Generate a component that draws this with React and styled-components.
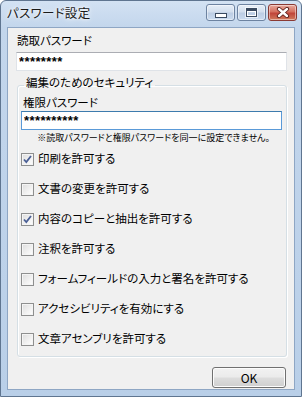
import React from 'react';
import styled, { createGlobalStyle } from 'styled-components';

const GlobalStyle = createGlobalStyle`
  html, body {
    margin: 0;
    padding: 0;
    background: #ffffff;
  }
  * {
    box-sizing: border-box;
  }
`;

const FONT = `"Noto Sans CJK JP", "Noto Sans", sans-serif`;

const Window = styled.div`
  width: 302px;
  height: 397px;
  display: flex;
  flex-direction: column;
  border: 1px solid #5f7590;
  border-radius: 6px 6px 0 0;
  padding: 0 6px 6px 6px;
  background: linear-gradient(180deg, #d3e2f3 0px, #c3d6ec 26px, #b9cfe8 100%);
  font-family: ${FONT};
  font-feature-settings: "palt";
  color: #000;
`;

const TitleBar = styled.div`
  height: 26px;
  display: flex;
  align-items: flex-start;
  justify-content: space-between;
`;

const Title = styled.div`
  font-size: 12.5px;
  line-height: 16px;
  padding-top: 4px;
  color: #1a1a1a;
  text-shadow: 0 0 6px #ffffff, 0 0 3px #ffffff;
  letter-spacing: 0.3px;
`;

const Caption = styled.div`
  display: flex;
  gap: 2px;
  padding-top: 3px;
  margin-right: -2px;
`;

const CapButton = styled.div`
  width: 29px;
  height: 17px;
  border: 1px solid ${p => (p.$close ? '#8a3a34' : '#6d83a1')};
  border-radius: 3px;
  display: flex;
  align-items: center;
  justify-content: center;
  background: ${p =>
    p.$close
      ? 'linear-gradient(180deg, #e8a99d 0%, #d4705f 45%, #c0453a 55%, #d07a5c 100%)'
      : 'linear-gradient(180deg, #e6eef8 0%, #d3dfee 45%, #bccde4 55%, #cbdcf0 100%)'};
  box-shadow: inset 0 0 0 1px rgba(255, 255, 255, 0.45);
`;

const MinGlyph = styled.div`
  width: 12px;
  height: 5px;
  margin-top: 5px;
  background: #ffffff;
  border: 1px solid #3a4a60;
`;

const MaxGlyph = styled.div`
  width: 11px;
  height: 9px;
  background: transparent;
  border: 1px solid #3a4a60;
  border-top-width: 3px;
  box-shadow: inset 0 0 0 1px #ffffff, 0 0 0 1px rgba(255, 255, 255, 0.6);
`;

const Client = styled.div`
  flex: 1;
  display: flex;
  flex-direction: column;
  background: #f0f0f0;
  border: 1px solid #8ea6c4;
  padding: 5px 7px 0 8px;
`;

const Label = styled.div`
  font-size: 11.5px;
  line-height: 14px;
  padding-left: ${p => p.$indent || 1}px;
  white-space: nowrap;
`;

const TextBox = styled.input`
  display: block;
  width: 100%;
  height: 19px;
  margin-top: ${p => p.$gap}px;
  padding: 0 2px;
  border: 1px solid ${p => (p.$focused ? '#5a9ad8' : '#dfe3e8')};
  border-top-color: ${p => (p.$focused ? '#3d7bad' : '#abadb3')};
  background: #ffffff;
  font-family: "Liberation Sans", sans-serif;
  font-size: 13px;
  font-weight: bold;
  letter-spacing: 0.4px;
  line-height: 17px;
  color: #000;
  outline: none;
`;

const Group = styled.fieldset`
  margin: 4px 0 0 1px;
  padding: 0 4px 3px 3px;
  border: 1px solid #d5dfe5;
  border-radius: 3px;
  box-shadow: inset 1px 1px 0 #ffffff, 1px 1px 0 #ffffff;
  min-width: 0;
`;

const Legend = styled.legend`
  font-size: 11.5px;
  line-height: 14px;
  padding: 0 2px 6px 2px;
  margin-left: 3px;
  white-space: nowrap;
`;

const Note = styled.div`
  font-size: 9px;
  line-height: 11px;
  margin-top: 2px;
  padding-right: 12px;
  text-align: right;
  white-space: nowrap;
`;

const CheckList = styled.div`
  display: flex;
  flex-direction: column;
`;

const CheckRow = styled.label`
  height: 30px;
  display: flex;
  align-items: center;
  gap: 4px;
  font-size: 11.5px;
  line-height: 14px;
  white-space: nowrap;
`;

const Box = styled.span`
  width: 13px;
  height: 13px;
  flex: none;
  margin-top: 2px;
  border: 1px solid #8e8f8f;
  background: linear-gradient(135deg, #dcdcdc 0%, #f2f2f2 60%, #ffffff 100%);
  box-shadow: inset 0 0 0 1px #f4f4f4;
  display: flex;
  align-items: center;
  justify-content: center;
`;

const Footer = styled.div`
  display: flex;
  justify-content: flex-end;
  margin-top: 10px;
`;

const Button = styled.button`
  width: 74px;
  height: 21px;
  border: 1px solid #707070;
  border-radius: 3px;
  background: linear-gradient(180deg, #f2f2f2 0%, #ebebeb 48%, #dddddd 52%, #cfcfcf 100%);
  box-shadow: inset 0 0 0 1px #fcfcfc;
  font-family: ${FONT};
  font-size: 12px;
  line-height: 14px;
  color: #000;
  padding: 0;
  margin-right: 1px;
`;

const CloseIcon = () => (
  <svg width="14" height="11" viewBox="0 0 14 11">
    <path d="M3 2 L11 9 M11 2 L3 9" stroke="#5a1f1a" strokeWidth="4.2" strokeLinecap="round" />
    <path d="M3 2 L11 9 M11 2 L3 9" stroke="#ffffff" strokeWidth="2.4" strokeLinecap="round" />
  </svg>
);

const CheckMark = () => (
  <svg width="9" height="9" viewBox="0 0 9 9">
    <path d="M1 4.5 L3.3 7 L8 1" fill="none" stroke="#4a5f95" strokeWidth="1.8" />
  </svg>
);

const options = [
  { text: '印刷を許可する', checked: true },
  { text: '文書の変更を許可する', checked: false },
  { text: '内容のコピーと抽出を許可する', checked: true },
  { text: '注釈を許可する', checked: false },
  { text: 'フォームフィールドの入力と署名を許可する', checked: false },
  { text: 'アクセシビリティを有効にする', checked: false },
  { text: '文章アセンブリを許可する', checked: false },
];

export default function App() {
  return (
    <>
      <GlobalStyle />
      <Window>
        <TitleBar>
          <Title>パスワード設定</Title>
          <Caption>
            <CapButton><MinGlyph /></CapButton>
            <CapButton><MaxGlyph /></CapButton>
            <CapButton $close><CloseIcon /></CapButton>
          </Caption>
        </TitleBar>
        <Client>
          <Label>読取パスワード</Label>
          <TextBox $gap={5} readOnly value="********" />
          <Group>
            <Legend>編集のためのセキュリティ</Legend>
            <Label $indent={2}>権限パスワード</Label>
            <TextBox $gap={2} $focused readOnly value="**********" />
            <Note>※読取パスワードと権限パスワードを同一に設定できません。</Note>
            <CheckList>
              {options.map((o, i) => (
                <CheckRow key={i}>
                  <Box>{o.checked && <CheckMark />}</Box>
                  {o.text}
                </CheckRow>
              ))}
            </CheckList>
          </Group>
          <Footer>
            <Button>OK</Button>
          </Footer>
        </Client>
      </Window>
    </>
  );
}
